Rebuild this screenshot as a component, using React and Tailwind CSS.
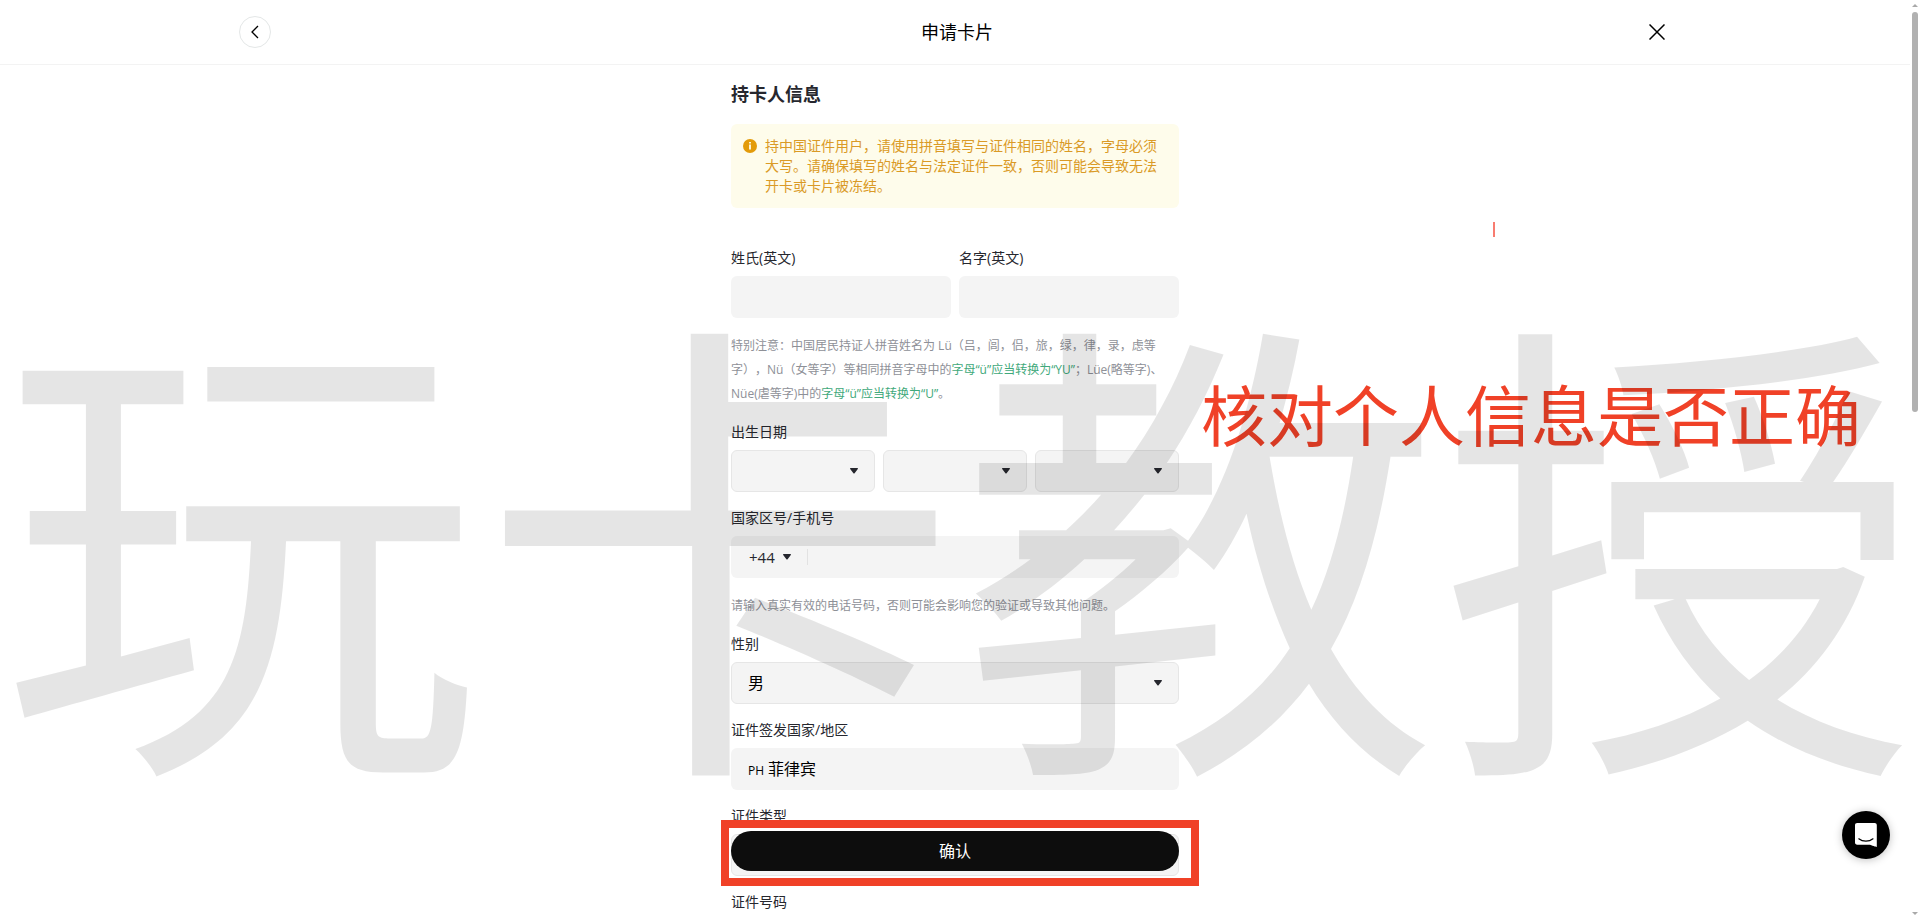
import React from 'react';

const FONT = "font-['Open_Sans','Noto_Sans_CJK_SC',sans-serif]";

const Caret = ({ className = '' }) => (
    <svg viewBox="0 0 8 6" className={`w-2 h-1.5 fill-[#26272e] pointer-events-none ${className}`} aria-hidden="true">
        <path d="M0.6 0h6.8c.5 0 .8.6.4 1L4.6 5.2a.8.8 0 0 1-1.2 0L.2 1C-.2.6.1 0 .6 0z" />
    </svg>
);

const Label = ({ htmlFor, children }) => (
    <label htmlFor={htmlFor} className="block text-sm leading-5 text-[#26272e]">
        {children}
    </label>
);

const SelectBox = ({ id, options = [''], ...rest }) => (
    <div className="relative flex-1">
        <select
            id={id}
            className="appearance-none block w-full h-[42px] rounded-md border border-[#e6e6e6] bg-[#f4f4f4] pl-4 pr-8 text-base text-black"
            {...rest}
        >
            {options.map((option) => (
                <option key={option}>{option}</option>
            ))}
        </select>
        <Caret className="absolute right-[17px] top-1/2 -translate-y-1/2" />
    </div>
);

const TextField = ({ id, label }) => (
    <div className="flex-1 flex flex-col gap-2">
        <Label htmlFor={id}>{label}</Label>
        <input id={id} type="text" className="w-full h-[42px] rounded-md bg-[#f4f4f4] px-4 text-base text-black" />
    </div>
);

const Header = () => (
    <header className="shrink-0 border-b border-[#f3f3f3]">
        <div className="w-3/4 h-16 mx-auto flex items-center justify-between">
            <button
                aria-label="返回"
                className="w-8 h-8 rounded-full border border-[#e4e7e7] flex items-center justify-center text-black"
            >
                <svg viewBox="0 0 16 16" className="w-4 h-4" fill="none" stroke="currentColor" strokeWidth="1.3" aria-hidden="true">
                    <path d="M11 2L5 8l6 6" />
                </svg>
            </button>
            <h1 className="text-lg leading-6 text-black">申请卡片</h1>
            <button aria-label="关闭" className="w-7 h-7 flex items-center justify-center text-black">
                <svg viewBox="0 0 16 16" className="w-4 h-4" fill="none" stroke="currentColor" strokeWidth="1.5" aria-hidden="true">
                    <path d="M0.5 0.5l15 15M15.5 0.5l-15 15" />
                </svg>
            </button>
        </div>
    </header>
);

const Notice = () => (
    <div className="mt-4 flex gap-2 rounded-md bg-[#fefceb] p-3 text-sm leading-5 text-[#da9a26]">
        <svg viewBox="0 0 14 14" className="w-3.5 h-3.5 mt-[3px] shrink-0" aria-hidden="true">
            <circle cx="7" cy="7" r="7" fill="#e39b09" />
            <path d="M6.1 3h1.8v1.6H6.1zM6.1 5.6h1.8v5H6.1z" fill="#fefceb" />
        </svg>
        <p>持中国证件用户，请使用拼音填写与证件相同的姓名，字母必须大写。请确保填写的姓名与法定证件一致，否则可能会导致无法开卡或卡片被冻结。</p>
    </div>
);

const CardholderForm = () => (
    <form className="w-[448px] mx-auto pt-[15px]">
        <h2 className="text-lg leading-7 font-bold text-[#26272e]">持卡人信息</h2>
        <Notice />

        <div className="mt-10 flex flex-col gap-4">
            <div className="flex gap-2">
                <TextField id="last-name" label="姓氏(英文)" />
                <TextField id="first-name" label="名字(英文)" />
            </div>

            <p className="text-xs leading-6 text-[#8e9097] [text-spacing-trim:space-all]">
                特别注意：中国居民持证人拼音姓名为 Lü（吕，闾，侣，旅，绿，律，录，虑等
                <br />
                字），Nü（女等字）等相同拼音字母中的
                <span className="text-[#3fa97b]">字母“ü”应当转换为“YU”</span>；Lüe(略等字)、
                <br />
                Nüe(虐等字)中的<span className="text-[#3fa97b]">字母“ü”应当转换为“U”</span>。
            </p>

            <div className="flex flex-col gap-2">
                <Label htmlFor="birth-year">出生日期</Label>
                <div className="flex gap-2">
                    <SelectBox id="birth-year" />
                    <SelectBox id="birth-month" aria-label="月" />
                    <SelectBox id="birth-day" aria-label="日" />
                </div>
            </div>

            <div className="flex flex-col gap-2">
                <Label htmlFor="phone">国家区号/手机号</Label>
                <div className="flex items-center h-[42px] rounded-md bg-[#f4f4f4] pl-[18px]">
                    <button type="button" className="flex items-center gap-2 pr-4 text-[15px] text-[#26272e]">
                        +44
                        <Caret />
                    </button>
                    <input id="phone" type="tel" className="flex-1 h-4 border-l border-[#e2e2e2] px-3 text-base" />
                </div>
            </div>

            <p className="text-xs leading-6 text-[#8e9097]">请输入真实有效的电话号码，否则可能会影响您的验证或导致其他问题。</p>

            <div className="flex flex-col gap-2">
                <Label htmlFor="gender">性别</Label>
                <SelectBox id="gender" options={['男', '女']} />
            </div>

            <div className="flex flex-col gap-2">
                <Label htmlFor="country">证件签发国家/地区</Label>
                <div className="flex items-center h-[42px] rounded-md bg-[#f4f4f4] px-[17px] text-black">
                    <div className="flex-1 flex items-baseline gap-1">
                        <span className="text-xs font-medium">PH</span>
                        <input id="country" type="text" defaultValue="菲律宾" className="flex-1 text-base" />
                    </div>
                </div>
            </div>

            <div className="flex flex-col gap-2">
                <Label htmlFor="id-type">证件类型</Label>
                <SelectBox id="id-type" />
            </div>

            <TextField id="id-number" label="证件号码" />
        </div>
    </form>
);

const Scrollbar = () => (
    <div className="w-2.5 shrink-0 flex flex-col items-center justify-between py-1" aria-hidden="true">
        <div className="flex-1 w-full flex flex-col items-center gap-[5px]">
            <svg viewBox="0 0 6 3" className="w-1.5 h-[3px] fill-[#a9a9a9]">
                <path d="M0 3L3 0l3 3z" />
            </svg>
            <div className="w-1.5 h-[44%] rounded-full bg-[#b1b1b1]" />
        </div>
        <svg viewBox="0 0 6 3" className="w-1.5 h-[3px] fill-[#a9a9a9]">
            <path d="M0 0l3 3 3-3z" />
        </svg>
    </div>
);

const ChatButton = () => (
    <button
        aria-label="客服"
        className="absolute right-[30px] bottom-[60px] z-30 w-12 h-12 rounded-full bg-black flex items-center justify-center shadow-[0_1px_8px_rgba(0,0,0,0.25)]"
    >
        <svg viewBox="0 0 22 24" className="w-[22px] h-6" aria-hidden="true">
            <path d="M2.2 0h17.4c1.3 0 2.2.9 2.2 2.2V24s-3.3-.8-6.8-2.2H2.2C.9 21.8 0 20.9 0 19.6V2.2C0 .9.9 0 2.2 0z" fill="#fff" />
            <path d="M3.8 15.8c4 3.2 10.2 3.2 14.2 0" fill="none" stroke="#000" strokeWidth="1.2" strokeLinecap="round" />
        </svg>
    </button>
);

export default function App() {
    return (
        <div className={`relative h-screen flex overflow-hidden bg-white ${FONT}`}>
            <div className="relative flex-1 min-w-0 flex flex-col">
                <Header />
                <main className="flex-1 min-h-0 overflow-hidden">
                    <CardholderForm />
                </main>

                {/* Sticky confirm action with highlight frame */}
                <div className="absolute bottom-12 left-1/2 -translate-x-1/2 z-10 w-[448px]">
                    <button className="w-full h-10 rounded-full bg-[#0d0d0d] text-base text-white">确认</button>
                    <div className="absolute -left-2.5 -right-5 -top-[11px] h-[66px] border-8 border-[#f04127] pointer-events-none" />
                </div>
            </div>
            <Scrollbar />
            <ChatButton />

            {/* Annotations */}
            <p className="absolute left-[1201px] top-[379px] text-[66px] leading-[66px] whitespace-nowrap text-[#f04127] font-['Noto_Sans_CJK_SC',sans-serif]">
                核对个人信息是否正确
            </p>
            <div className="absolute left-[1493px] top-[222px] w-0.5 h-[15px] bg-[#f87c70]" />

            {/* Watermark */}
            <div className="absolute left-0 top-[288px] z-20 text-[480px] leading-[480px] whitespace-nowrap text-black/10 pointer-events-none select-none font-['Noto_Sans_CJK_SC',sans-serif]">
                玩卡教授
            </div>
        </div>
    );
}
